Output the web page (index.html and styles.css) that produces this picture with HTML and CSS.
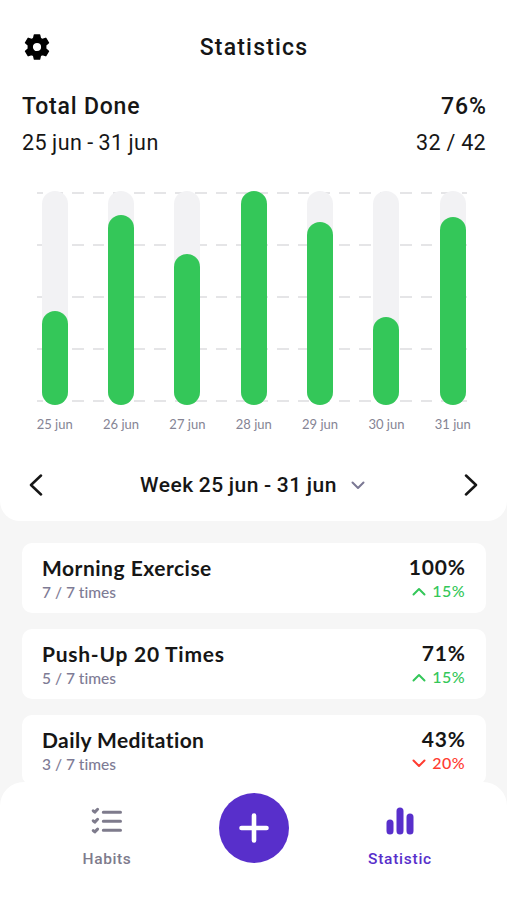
FILE: index.html
```html
<!DOCTYPE html>
<html lang="en">
<head>
<meta charset="utf-8">
<title>Statistics</title>
<link rel="stylesheet" href="styles.css">
</head>
<body>
<div class="app">
  <section class="panel">
    <header class="topbar">
      <svg class="gear" viewBox="0 0 26 26"><path fill-rule="evenodd" stroke="#000" stroke-width="1.400" stroke-linejoin="round" d="M10.400 1h5.200l.8 3.400 2 1.100 3.400-1.200 2.700 4.500-2.800 2.400v3.600l2.800 2.400-2.700 4.500-3.400-1.200-2 1.100-.8 3.400h-5.200l-.8-3.400-2-1.100-3.400 1.200-2.700-4.500 2.800-2.400v-3.600L1.500 8.800l2.700-4.500 3.400 1.200 2-1.100zM13 8.200a4.800 4.800 0 1 0 0 9.600a4.800 4.800 0 1 0 0-9.600z"/></svg>
      <h1 class="title"><span>Statistics</span></h1>
    </header>
    <div class="totals">
      <span class="t-label">Total Done</span><span class="t-percent">76%</span>
      <span class="t-range">25 jun - 31 jun</span><span class="t-count">32 / 42</span>
    </div>
    <div class="chart">
      <div class="gridlines"><i></i><i></i><i></i><i></i><i></i></div>
      <div class="track"><div class="bar" style="height:94px"></div></div>
      <div class="track"><div class="bar" style="height:190px"></div></div>
      <div class="track"><div class="bar" style="height:151px"></div></div>
      <div class="track"><div class="bar" style="height:214.500px"></div></div>
      <div class="track"><div class="bar" style="height:183.500px"></div></div>
      <div class="track"><div class="bar" style="height:88.500px"></div></div>
      <div class="track"><div class="bar" style="height:188.500px"></div></div>
    </div>
    <div class="days"><span>25 jun</span><span>26 jun</span><span>27 jun</span><span>28 jun</span><span>29 jun</span><span>30 jun</span><span>31 jun</span></div>
    <nav class="week">
      <svg class="arrow" viewBox="0 0 14 22"><path d="M12 1.500 2 11l10 9.500"/></svg>
      <div class="week-pick"><span class="week-name">Week 25 jun - 31 jun</span><svg class="caret" viewBox="0 0 14 9"><path d="M1.500 1.500 7 7l5.500-5.500"/></svg></div>
      <svg class="arrow" viewBox="0 0 14 22"><path d="M2 1.500 12 11 2 20.500"/></svg>
    </nav>
  </section>
  <main class="list">
    <article class="card">
      <div><h2 class="name n1">Morning Exercise</h2><p class="times">7 / 7 times</p></div>
      <div class="score"><strong>100%</strong><span class="trend up"><svg viewBox="0 0 14 9"><path d="M1.500 7.500 7 2l5.500 5.500"/></svg><b>15%</b></span></div>
    </article>
    <article class="card">
      <div><h2 class="name n2">Push-Up 20 Times</h2><p class="times">5 / 7 times</p></div>
      <div class="score"><strong>71%</strong><span class="trend up"><svg viewBox="0 0 14 9"><path d="M1.500 7.500 7 2l5.500 5.500"/></svg><b>15%</b></span></div>
    </article>
    <article class="card">
      <div><h2 class="name n3">Daily Meditation</h2><p class="times">3 / 7 times</p></div>
      <div class="score"><strong>43%</strong><span class="trend down"><svg viewBox="0 0 14 9"><path d="M1.500 1.500 7 7l5.500-5.500"/></svg><b>20%</b></span></div>
    </article>
  </main>
  <footer class="tabs">
    <div class="tab">
      <svg class="tab-icon" viewBox="0 0 32 28"><g fill="none" stroke="currentColor" stroke-width="3" stroke-linecap="round"><path d="M12.300 5.300h17.200M12.300 14.300h17.200M12.300 23.300h17.200"/><path stroke-linejoin="round" stroke-width="3" d="m2.200 3.800 1.600 1.300 2.800-2.800M2.200 13.800l1.600 1.300 2.800-2.800M2.200 23.600l1.600 1.300 2.800-2.800"/></g></svg>
      <span class="habits">Habits</span>
    </div>
    <button class="add" aria-label="Add"><svg viewBox="0 0 30 30"><path d="M15 2.500v25M2.500 15h25"/></svg></button>
    <div class="tab active">
      <svg class="tab-icon" viewBox="0 0 32 28"><path fill="none" stroke="currentColor" stroke-width="7" stroke-linecap="round" d="M6 16v8M16 4v20M26 10v14"/></svg>
      <span class="statistic">Statistic</span>
    </div>
  </footer>
</div>
</body>
</html>
```
FILE: styles.css
```css
* { box-sizing: border-box; }
body { margin: 0; background: #f6f6f6; color: #161616; font-family: Roboto, sans-serif; font-variant-ligatures: none; }
h1, h2, p { margin: 0; }
.app { height: 900px; display: flex; flex-direction: column; overflow: hidden; }
.panel { height: 521px; flex: none; background: #fff; border-radius: 0 0 20px 20px; padding: 32px 21px 0 22px; }
.topbar { height: 30px; display: grid; grid-template-columns: 30px 1fr 30px; align-items: center; }
.gear { width: 26px; height: 26px; margin: -1px 0 0 2px; }
.title { text-align: center; font-size: 23px; font-weight: 500; line-height: 30px; letter-spacing: 1.2px; padding-top: 1px; }
.totals { margin-top: 30px; display: grid; grid-template-columns: 1fr auto; row-gap: 6px; line-height: 30px; }
.t-label, .t-percent { font-size: 23px; font-weight: 500; }
.t-label { letter-spacing: .8px; }
.t-percent { letter-spacing: .9px; margin-right: -.9px; }
.t-range, .t-count { font-size: 21.5px; }
.t-range { letter-spacing: .5px; word-spacing: -1px; }
.t-count { letter-spacing: .3px; }
.t-percent, .t-count { text-align: right; }
.chart { position: relative; height: 214.5px; margin: 32.5px 0 0 -.5px; display: grid; grid-template-columns: repeat(7, 1fr); justify-items: center; }
.gridlines { position: absolute; inset: 1px 19px 3px 15.5px; display: flex; flex-direction: column; justify-content: space-between; }
.gridlines i { height: 2px; background: repeating-linear-gradient(90deg, #e5e5e7 0 11.3px, transparent 11.3px 20.5px) -5.700px 0 / 600px 2px; }
.track { position: relative; width: 26px; height: 214.5px; border-radius: 13px; background: #f2f2f4; display: flex; align-items: flex-end; }
.bar { width: 26px; border-radius: 13px; background: #34c759; }
.days { margin: 9.5px 0 0 -.5px; display: grid; grid-template-columns: repeat(7, 1fr); text-align: center; font: 13px/18px Lato, sans-serif; color: #858494; }
.week { margin-top: 37px; height: 30px; display: flex; align-items: center; justify-content: space-between; padding: 0 8px 0 7px; }
.arrow { width: 14px; height: 22px; fill: none; stroke: #161616; stroke-width: 2.5; stroke-linecap: round; stroke-linejoin: round; }
.week-pick { display: flex; align-items: center; gap: 14px; margin-left: -2px; }
.week-name { font-size: 21px; font-weight: 500; letter-spacing: .5px; word-spacing: -.6px; }
.caret { width: 14px; height: 9px; margin-top: 2px; fill: none; stroke: #7b7894; stroke-width: 2; stroke-linecap: round; stroke-linejoin: round; }
.list { flex: 1; min-height: 0; padding: 22px 21px 0 22px; display: flex; flex-direction: column; gap: 16px; font-family: Lato, sans-serif; }
.card { flex: none; height: 70px; padding: 11px 21px 0 20px; border-radius: 10px; background: #fff; display: flex; justify-content: space-between; }
.name { font-size: 21px; font-weight: 700; line-height: 28px; }
.n1 { letter-spacing: .5px; }
.n2 { letter-spacing: .75px; }
.n3 { letter-spacing: .4px; }
.times { font-size: 15.5px; font-weight: 500; line-height: 20px; color: #7e7b95; }
.score { display: flex; flex-direction: column; align-items: flex-end; }
.score strong { font-size: 21px; font-weight: 700; line-height: 25px; letter-spacing: .8px; margin-right: -.8px; }
.trend { display: flex; align-items: center; gap: 6px; font-size: 16px; line-height: 24px; }
.trend b { font-weight: 500; letter-spacing: .4px; }
.trend svg { width: 14px; height: 9px; fill: none; stroke: currentColor; stroke-width: 2; stroke-linecap: round; stroke-linejoin: round; }
.up { color: #34c759; }
.down { color: #ff3b30; }
.tabs { position: relative; flex: none; height: 118px; background: #fff; border-radius: 24px 24px 0 0; padding: 11px 47px 0; display: grid; grid-template-columns: 120px 1fr 120px; justify-items: center; align-items: start; }
.tab { padding-top: 14px; display: flex; flex-direction: column; align-items: center; gap: 14px; color: #7e7b8c; font-size: 15.5px; font-weight: 500; line-height: 20px; }
.tab.active { color: #582fcb; }
.tab-icon { width: 32px; height: 28px; }
.add { width: 70px; height: 70px; padding: 0; border: 0; border-radius: 50%; background: #582fcb; display: grid; place-items: center; }
.add svg { width: 30px; height: 30px; fill: none; stroke: #fff; stroke-width: 4.6; stroke-linecap: round; }
.habits { letter-spacing: .6px; }
.statistic { letter-spacing: .75px; }
```
